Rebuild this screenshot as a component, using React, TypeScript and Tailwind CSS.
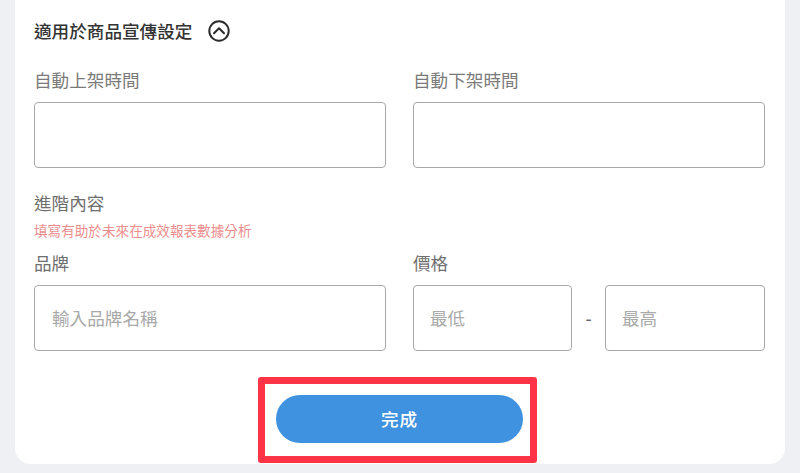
const cjk = { fontFamily: '"Noto Sans CJK TC", "Noto Sans", sans-serif' };

function Field({ placeholder, className }: { placeholder?: string; className?: string }) {
  return (
    <div className={`h-[66px] border border-[#a8a8a8] rounded-[4px] bg-white flex items-center text-[17.6px] text-[#a9a9a9] ${className ?? ''}`}>
      {placeholder}
    </div>
  );
}

export default function App() {
  return (
    <div style={cjk} className="w-[800px] h-[473px] overflow-hidden bg-[#eef0f3] px-[15px]">
      <div className="h-[464px] bg-white rounded-b-[16px] pl-[19px] pr-[20px] flex flex-col">
        {/* Section header */}
        <div className="flex items-center h-[20px] mt-[21px] gap-[16px]">
          <span className="text-[17.6px] leading-[20px] font-medium text-[#333333]">適用於商品宣傳設定</span>
          <svg width="22" height="22" viewBox="0 0 22 22" fill="none" stroke="#2b2b2b" strokeWidth="2">
            <circle cx="11" cy="11" r="9.7" />
            <path d="M6 13.2 L11 8.2 L16 13.2" strokeLinecap="round" strokeLinejoin="round" />
          </svg>
        </div>

        {/* Auto schedule */}
        <div className="grid grid-cols-[352px_352px] gap-x-[27px] mt-[28px]">
          <div>
            <div className="text-[17.6px] leading-[22px] text-[#7a7a7a]">自動上架時間</div>
            <Field className="mt-[11px]" />
          </div>
          <div>
            <div className="text-[17.6px] leading-[22px] text-[#7a7a7a]">自動下架時間</div>
            <Field className="mt-[11px]" />
          </div>
        </div>

        {/* Advanced */}
        <div className="text-[17.6px] leading-[22px] text-[#6f6f6f] mt-[24px]">進階內容</div>
        <div className="text-[13.6px] leading-[18px] text-[#ec8d8d] mt-[7px]">填寫有助於未來在成效報表數據分析</div>

        <div className="grid grid-cols-[352px_352px] gap-x-[27px] mt-[13px]">
          <div>
            <div className="text-[17.6px] leading-[22px] text-[#6f6f6f]">品牌</div>
            <Field className="mt-[11px] pl-[17px]" placeholder="輸入品牌名稱" />
          </div>
          <div>
            <div className="text-[17.6px] leading-[22px] text-[#6f6f6f]">價格</div>
            <div className="flex items-center mt-[11px]">
              <Field className="w-[159px] pl-[16px]" placeholder="最低" />
              <span className="w-[33px] text-center text-[17px] font-medium text-[#666666]">-</span>
              <Field className="w-[160px] pl-[16px]" placeholder="最高" />
            </div>
          </div>
        </div>

        {/* Submit, highlighted */}
        <div className="self-center mt-[26px] mr-[4px] w-[279px] h-[86px] border-[7px] border-[#ff3346] rounded-[3px] pl-[4px] pb-[2px] flex items-center justify-center">
          <button className="w-[247px] h-[48px] rounded-full bg-[#3f92e0] text-white text-[17.6px] font-medium tracking-[1px]">完成</button>
        </div>
      </div>
    </div>
  );
}
